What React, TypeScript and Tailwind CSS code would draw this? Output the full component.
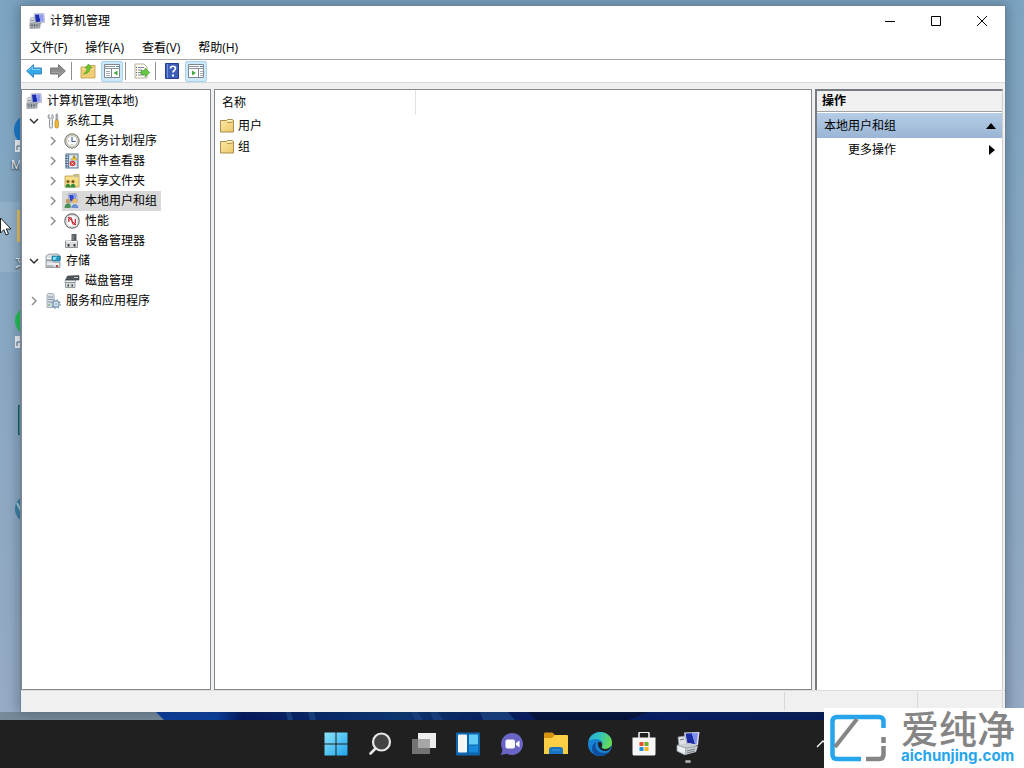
import { ReactNode, useState } from "react";
import clsx from "clsx";

type IconProps = { className?: string };

const ComputerIcon = ({ className = "size-4" }: IconProps) => (
  <svg viewBox="0 0 16 16" className={className} aria-hidden="true">
    <path d="M1 6.500 2 4.500l4-.5.5 5-5 1z" fill="#d5d9de" stroke="#9aa0a8" strokeWidth=".6" />
    <path d="M5 .8 15 .4l.6 9L6 10z" fill="#d4d7e2" stroke="#a0a5b8" strokeWidth=".6" />
    <path d="m6 1.800 4-.2L11.500 8.700 6.800 9z" fill="#1b2cae" />
    <path d="m10 1.600 4.200-.2.500 7-3.200.3z" fill="#8f9cf0" />
    <path d="m9 10 3-.2.500 1.500-3 .3z" fill="#9aa0a8" />
    <path d="M.8 10.200 9 9.800l2 1.200v4l-10 .5z" fill="#b3b8bd" stroke="#7d838a" strokeWidth=".6" />
    <path d="M1 12.200h10" stroke="#757c84" strokeWidth=".8" />
    <path d="M3 11v3.500M5.500 11v3.500M8 11v3.500" stroke="#656c74" strokeWidth="1" />
    <path d="M2 7.500h3" stroke="#8b9198" strokeWidth="1" />
  </svg>
);

const ToolsIcon = () => (
  <svg viewBox="0 0 16 16" className="size-4" aria-hidden="true">
    <path d="M3 1.500v3l1.500 1L6 4.500v-3c1.500.800 2 3 .5 4.800V14c0 1.500-3 1.500-3 0V6.300C1.500 5 1.800 2.200 3 1.500z" transform="translate(1)" fill="#e9ebee" stroke="#7d848c" strokeWidth=".8" />
    <path d="M11 1h1.500l.3 6h-2z" fill="#a8afb6" stroke="#767d85" strokeWidth=".5" />
    <rect x="10" y="7" width="3.500" height="8" rx="1.500" fill="#f0b63b" stroke="#b37b10" strokeWidth=".6" />
  </svg>
);

const ClockIcon = () => (
  <svg viewBox="0 0 16 16" className="size-4" aria-hidden="true">
    <circle cx="8" cy="8" r="7.200" fill="#d6d3c5" stroke="#77756b" strokeWidth="1" />
    <circle cx="8" cy="8" r="5.300" fill="#f8fbff" stroke="#aaa99f" strokeWidth=".6" />
    <path d="M8 4v4.500h3.500" fill="none" stroke="#3c5788" strokeWidth="1.100" />
    <path d="M4 8h1M8 12v-1M12 8h-.5" stroke="#b38a3b" strokeWidth="1" />
  </svg>
);

const EventIcon = () => (
  <svg viewBox="0 0 16 16" className="size-4" aria-hidden="true">
    <rect x="2" y="1" width="12" height="14" fill="#c8d8e8" stroke="#5b7893" />
    <path d="M4.500 1v14" stroke="#66829d" />
    <path d="M1 3h3M1 5.500h3M1 8h3M1 10.500h3M1 13h3" stroke="#44617f" strokeWidth=".9" />
    <path d="M6 4h6M6 13.500h6" stroke="#fff" />
    <path d="m10 2 3 5H7.500z" fill="#f8d744" stroke="#b28f16" strokeWidth=".5" />
    <path d="M10.200 3.500v2" stroke="#333" strokeWidth=".8" />
    <circle cx="8.500" cy="10.500" r="2.800" fill="#d83b3b" />
    <path d="m7.500 9.500 2 2m0-2-2 2" stroke="#fff" strokeWidth=".8" />
  </svg>
);

const FolderIcon = ({ className = "size-3.5" }: IconProps) => (
  <svg viewBox="0 0 14 14" className={className} aria-hidden="true">
    <defs>
      <linearGradient id="folderFill" x1="0" y1="0" x2="1" y2="1">
        <stop offset="0" stopColor="#fbe9a6" />
        <stop offset="1" stopColor="#ecc868" />
      </linearGradient>
    </defs>
    <path d="M.5 1.500h6l1-1h5l1 1v11.500H.5z" fill="url(#folderFill)" stroke="#a98d4e" strokeWidth="1" />
    <path d="M7 3.500h4.500l1-1.500" fill="none" stroke="#a98d4e" strokeWidth=".8" />
    <path d="M8 1.700h4" stroke="#fffbe2" strokeWidth="1" />
  </svg>
);

const SharedFolderIcon = () => (
  <svg viewBox="0 0 16 16" className="size-4" aria-hidden="true">
    <path d="M1 3h8l1-1.500h5V14H1z" fill="#f5dc86" stroke="#bd9a48" strokeWidth=".8" />
    <path d="M10 3h4" stroke="#6fa8d8" />
    <circle cx="4" cy="8.500" r="1.600" fill="#7a5a20" />
    <path d="M1.500 14.500c0-5 5-5 5 0z" fill="#348e3e" />
    <circle cx="9" cy="8.500" r="1.600" fill="#7a5a20" />
    <path d="M6.500 14.500c0-5 5-5 5 0z" fill="#348e3e" />
  </svg>
);

const UsersIcon = () => (
  <svg viewBox="0 0 16 16" className="size-4" aria-hidden="true">
    <path d="m4 1 8.500-.5 1 8-8 1z" fill="#d4d9ea" stroke="#838cab" strokeWidth=".6" />
    <path d="m5 2 6.500-.4.900 6L6.500 8.400z" fill="#2c47c7" />
    <path d="m9 2 2.500-.3.900 6-2 .3z" fill="#8ca0f0" />
    <circle cx="4" cy="8" r="2.300" fill="#c8995f" />
    <path d="M.5 15c0-6.500 7-6.500 7 0z" fill="#4b9157" />
    <circle cx="10.800" cy="8" r="2.600" fill="#e9bd68" />
    <path d="M6.800 15.500c0-6.500 8.200-6.500 8.200 0z" fill="#6b8fd0" stroke="#f2f5fc" strokeWidth=".6" />
  </svg>
);

const PerformanceIcon = () => (
  <svg viewBox="0 0 16 16" className="size-4" aria-hidden="true">
    <circle cx="8" cy="8" r="7.200" fill="#fff" stroke="#6d6d6d" strokeWidth="1.200" />
    <circle cx="8" cy="8" r="5.700" fill="none" stroke="#c9c9c9" strokeWidth=".8" />
    <path d="M4.800 9V6.500c0-2.500 2.600-2.500 2.900 0l.6 3c.4 2.500 2.900 2.500 3 0V6" fill="none" stroke="#c72b36" strokeWidth="1.300" />
    <path d="m4 4 8 8" stroke="#c72b36" strokeWidth="1" />
  </svg>
);

const DeviceIcon = () => (
  <svg viewBox="0 0 16 16" className="size-4" aria-hidden="true">
    <path d="M7.500 1h5v7h-5z" fill="#565c62" />
    <path d="M8.500 2h1v5h-1z" fill="#8b9298" />
    <path d="M1.500 8h12v6.500h-12z" fill="#d9dcde" stroke="#777d83" strokeWidth=".8" />
    <path d="M2 8.500h11" stroke="#f6f7f7" />
    <path d="M3.500 11h2v2.500h-2zM9.500 11h2v2.500h-2z" fill="#34393d" />
  </svg>
);

const StorageIcon = () => (
  <svg viewBox="0 0 16 16" className="size-4" aria-hidden="true">
    <path d="M1 3 4 1h9l2.500 2v4H1z" fill="#dce0e3" stroke="#7b848b" strokeWidth=".7" />
    <path d="M7 3h8v5H7z" fill="#229bc4" stroke="#146d95" strokeWidth=".6" />
    <path d="m8 4 4-.3L10 7H8z" fill="#8fe0f4" />
    <path d="M1 7.500h6L9 9h6v5.500H1z" fill="#d5d9dc" stroke="#717980" strokeWidth=".7" />
    <path d="M2 5.500h4M2 11h12" stroke="#fff" strokeWidth="1" />
    <path d="M2 13h6" stroke="#7b848b" strokeWidth=".8" />
    <path d="M11 12h2v2h-2z" fill="#b54533" />
  </svg>
);

const DiskIcon = () => (
  <svg viewBox="0 0 16 16" className="size-4" aria-hidden="true">
    <path d="M3.500 3 15 2.500V7H1.500z" fill="#50565b" stroke="#2e3337" strokeWidth=".5" />
    <path d="M10 4.500h4" stroke="#c6cacd" />
    <path d="M1 7.500h11l-1 2H1z" fill="#f2f3f4" stroke="#777d83" strokeWidth=".6" />
    <path d="M1.500 9.500h9.500v5H1.500z" fill="#d7dadc" stroke="#777d83" strokeWidth=".7" />
    <path d="M3.500 11.500h1.500v2H3.500zM7.500 11.500H9v2H7.500z" fill="#3b4044" />
  </svg>
);

const ServicesIcon = () => (
  <svg viewBox="0 0 16 16" className="size-4" aria-hidden="true">
    <path d="M2 1.500 3.500.5H8l1 1v13H2z" fill="#d6dee4" stroke="#8897a3" strokeWidth=".7" />
    <path d="M3 4h5M3 6.500h5M3 9h5" stroke="#758693" strokeWidth=".8" />
    <path d="M3 12h2" stroke="#46a35a" />
    <circle cx="11" cy="11" r="3" fill="#e6eff6" stroke="#80a0b9" strokeWidth="1.500" />
    <circle cx="11" cy="11" r="4.300" fill="none" stroke="#80a0b9" strokeWidth="1.200" strokeDasharray="1.700 1.700" />
    <circle cx="11" cy="11" r="1" fill="#80a0b9" />
  </svg>
);

const ArrowIcon = ({ forward = false }: { forward?: boolean }) => (
  <svg viewBox="0 0 16 16" className={clsx("size-4", forward && "rotate-180")} aria-hidden="true">
    <path
      d="M.6 8 7.500 1.600V5H15.400v6H7.500v3.400z"
      fill={forward ? "#8e8e8e" : "#35a7e8"}
      stroke={forward ? "#6f6f6f" : "#2b7fb8"}
      strokeWidth=".9"
      strokeLinejoin="round"
    />
    <path d="M2.500 7.500 6.500 3.800V6.500h8" fill="none" stroke={forward ? "#a4a4a4" : "#7fd6fa"} strokeWidth="1" />
  </svg>
);

const UpFolderIcon = () => (
  <svg viewBox="0 0 16 16" className="size-4" aria-hidden="true">
    <path d="M1 4h7l1.500-1.500H15V15H1z" fill="#f1ce73" stroke="#c09a48" strokeWidth=".8" />
    <path d="M2 6h12" stroke="#fae8ac" />
    <path d="M3.500 11C6 9.500 7 7.500 7 5H5L8.500 1 12 5h-2c0 3.500-2.500 6-6.500 6z" fill="#6ac52f" stroke="#3b8e18" strokeWidth=".5" />
  </svg>
);

const PaneIcon = ({ right = false }: { right?: boolean }) => (
  <svg viewBox="0 0 18 16" className="h-4 w-[18px]" aria-hidden="true">
    <path d="M1.500 1.500h15v13h-15z" fill="#fff" stroke="#7d8790" />
    <path d="M1 5.500h16M2 3.500h10" stroke="#8b949c" strokeWidth="1" />
    <path d="M13 3.500h3" stroke="#4b80bd" strokeWidth="1" />
    <path d={right ? "M11.500 6v8" : "M8.500 6v8"} stroke="#7d8790" />
    <path d={right ? "M13 8.500h3M13 10.500h3M13 12.500h3" : "M3 8.500h4M3 10.500h4M3 12.500h4"} stroke="#a3adb5" />
    <path d={right ? "m5 7.500 4 2.500-4 2.500z" : "m14.500 7.500-4 2.500 4 2.500z"} fill="#43a83c" />
  </svg>
);

const ExportIcon = () => (
  <svg viewBox="0 0 16 16" className="size-4" aria-hidden="true">
    <path d="M1 1h9l3 3v11H1z" fill="#fffdf0" stroke="#a3a08c" strokeWidth=".8" />
    <path d="M4 4.500h6M4 7h4M4 9.500h4M4 12h6" stroke="#767da5" strokeWidth=".9" />
    <path d="M2 4.500h1M2 7h1M2 9.500h1M2 12h1" stroke="#333" strokeWidth=".8" />
    <path d="M7 7.500h4V5l4.800 4.500L11 14v-2.500H7z" fill="#68c842" stroke="#3d9229" strokeWidth=".6" />
  </svg>
);

const HelpIcon = () => (
  <svg viewBox="0 0 16 16" className="size-4" aria-hidden="true">
    <path d="M1.500.5h13v15h-13z" fill="#3c5eb9" stroke="#243f8e" />
    <path d="M3.500 1v14" stroke="#7993d8" />
    <path d="M6.500 5.500c0-3 5-3 5 0 0 2-2.500 2-2.500 4" fill="none" stroke="#fff" strokeWidth="1.700" />
    <path d="M8 11.500h2v2H8z" fill="#fff" />
  </svg>
);

const Chevron = ({ open }: { open: boolean }) => (
  <svg viewBox="0 0 10 10" className="size-2.5" aria-hidden="true">
    {open ? (
      <path d="m1 3 4 4 4-4" fill="none" stroke="#333" strokeWidth="1.500" />
    ) : (
      <path d="m3 1 4 4-4 4" fill="none" stroke="#8a8a8a" strokeWidth="1.400" />
    )}
  </svg>
);

type TreeItem = {
  label: string;
  icon: ReactNode;
  open?: boolean;
  expandable?: boolean;
  children?: TreeItem[];
};

const treeItems: TreeItem[] = [
  {
    label: "系统工具",
    icon: <ToolsIcon />,
    expandable: true,
    open: true,
    children: [
      { label: "任务计划程序", icon: <ClockIcon />, expandable: true },
      { label: "事件查看器", icon: <EventIcon />, expandable: true },
      { label: "共享文件夹", icon: <SharedFolderIcon />, expandable: true },
      { label: "本地用户和组", icon: <UsersIcon />, expandable: true },
      { label: "性能", icon: <PerformanceIcon />, expandable: true },
      { label: "设备管理器", icon: <DeviceIcon /> },
    ],
  },
  {
    label: "存储",
    icon: <StorageIcon />,
    expandable: true,
    open: true,
    children: [{ label: "磁盘管理", icon: <DiskIcon /> }],
  },
  { label: "服务和应用程序", icon: <ServicesIcon />, expandable: true },
];

const menus = ["文件(F)", "操作(A)", "查看(V)", "帮助(H)"];

const TitleBar = () => (
  <header className="flex h-[29px] items-center pl-2">
    <ComputerIcon />
    <h1 className="ml-[5px] flex-1">计算机管理</h1>
    <button aria-label="最小化" className="flex h-full w-[46px] items-center justify-center">
      <svg viewBox="0 0 12 12" className="size-3"><path d="M1 6.500h10" stroke="#000" /></svg>
    </button>
    <button aria-label="最大化" className="flex h-full w-[46px] items-center justify-center">
      <svg viewBox="0 0 12 12" className="size-3"><path d="M1.500 1.500h9v9h-9z" fill="none" stroke="#000" /></svg>
    </button>
    <button aria-label="关闭" className="flex h-full w-[46px] items-center justify-center">
      <svg viewBox="0 0 12 12" className="size-3"><path d="m1 1 10 10M11 1 1 11" stroke="#000" /></svg>
    </button>
  </header>
);

const ToolButton = ({ label, active, children }: { label: string; active?: boolean; children: ReactNode }) => (
  <button
    aria-label={label}
    className={clsx(
      "flex h-[21px] w-[22px] items-center justify-center rounded-xs",
      active && "border border-[#a5d3f2] bg-[#cfe8f8]"
    )}
  >
    {children}
  </button>
);

const Separator = () => <span className="mr-[3px] h-[18px] w-px bg-[#8f8f8f]" />;

const Toolbar = () => (
  <div className="flex h-[23px] items-center gap-0.5 border-b border-[#d9d9d9] pl-0.5">
    <ToolButton label="后退"><ArrowIcon /></ToolButton>
    <ToolButton label="前进"><ArrowIcon forward /></ToolButton>
    <Separator />
    <ToolButton label="向上"><UpFolderIcon /></ToolButton>
    <ToolButton label="显示控制台树" active><PaneIcon /></ToolButton>
    <Separator />
    <ToolButton label="导出列表"><ExportIcon /></ToolButton>
    <Separator />
    <ToolButton label="帮助"><HelpIcon /></ToolButton>
    <ToolButton label="显示操作窗格" active><PaneIcon right /></ToolButton>
  </div>
);

const TreeRow = ({ item, nested, selected, onSelect }: {
  item: TreeItem;
  nested?: boolean;
  selected: string;
  onSelect: (label: string) => void;
}) => (
  <li>
    <div className={clsx("flex h-5 items-center", nested ? "pl-[26px]" : "pl-[7px]")}>
      <span className="w-3.5">{item.expandable && <Chevron open={!!item.open} />}</span>
      <button
        onClick={() => onSelect(item.label)}
        className={clsx("flex h-5 items-center gap-[5px] px-[2px] pr-1", selected === item.label && "bg-[#d9d9d9]")}
      >
        {item.icon}
        {item.label}
      </button>
    </div>
    {item.open && item.children && (
      <ul>
        {item.children.map((child) => (
          <TreeRow key={child.label} item={child} nested selected={selected} onSelect={onSelect} />
        ))}
      </ul>
    )}
  </li>
);

const ConsoleTree = () => {
  const [selected, setSelected] = useState("本地用户和组");

  return (
    <nav className="w-[190px] shrink-0 border border-[#828790] bg-white pt-px">
      <button className="flex h-5 items-center gap-[5px] pl-1">
        <ComputerIcon />
        计算机管理(本地)
      </button>
      <ul>
        {treeItems.map((item) => (
          <TreeRow key={item.label} item={item} selected={selected} onSelect={setSelected} />
        ))}
      </ul>
    </nav>
  );
};

const FileList = () => (
  <main className="min-w-0 flex-1 border border-[#828790] bg-white">
    <table className="w-[201px] text-left">
      <thead>
        <tr>
          <th className="h-[25px] border-r border-[#e2e2e2] pl-[7px] font-normal">名称</th>
        </tr>
      </thead>
      <tbody>
        {["用户", "组"].map((name) => (
          <tr key={name}>
            <td className="h-[21px] pl-[5px]">
              <span className="flex items-center gap-1">
                <FolderIcon />
                {name}
              </span>
            </td>
          </tr>
        ))}
      </tbody>
    </table>
  </main>
);

const ActionsPane = () => (
  <aside className="w-[188px] shrink-0 border-t-2 border-r border-l-2 border-t-[#777a80] border-r-[#d0d0d0] border-l-[#777a80] bg-white">
    <h2 className="flex h-[21px] items-center border-b border-[#a0a0a0] bg-[#f0f0f0] pl-[5px] font-bold">操作</h2>
    <button className="mt-px flex h-[25px] w-full items-center justify-between bg-linear-to-b from-[#b5cce5] to-[#9ab5d5] pr-1.5 pl-[7px]">
      本地用户和组
      <svg viewBox="0 0 10 6" className="h-1.5 w-2.5"><path d="m5 0 5 6H0z" /></svg>
    </button>
    <button className="flex h-[23px] w-full items-center justify-between pr-[7px] pl-[31px]">
      更多操作
      <svg viewBox="0 0 6 10" className="h-2.5 w-1.5"><path d="m0 0 6 5-6 5z" /></svg>
    </button>
  </aside>
);

// shortcuts that stick out from behind the window
const DesktopIcons = () => (
  <div className="absolute top-0 left-0 w-12" aria-hidden="true">
    <svg viewBox="0 0 48 720" className="h-[720px] w-12">
      <circle cx="30" cy="130" r="16" fill="#1678c8" />
      <path d="M15 140h12v12H15z" fill="#f4f6f8" />
      <path d="M17 150v-4h3" fill="none" stroke="#44637c" />
      <path d="M0 202h48v70H0z" fill="#fff" opacity=".1" />
      <path d="M17 210h20v32H17z" fill="#ecc25c" />
      <circle cx="29" cy="321" r="14" fill="#21c34f" />
      <path d="M15 336h12v12H15z" fill="#f4f6f8" />
      <path d="M17 346v-4h3" fill="none" stroke="#44637c" />
      <path d="M18.500 405.500h12v29h-12z" fill="#3b9095" stroke="#17565c" />
      <circle cx="29" cy="509" r="14" fill="#397f9e" />
      <path d="m17 503 5 10" stroke="#a8ccdc" strokeWidth="2" />
    </svg>
    <span className="absolute top-[157px] left-[11px] text-xs text-white [text-shadow:0_1px_2px_#000]">M</span>
    <span className="absolute top-[255px] left-[15px] text-xs text-white [text-shadow:0_1px_2px_#000]">文</span>
  </div>
);

const Wallpaper = () => (
  <svg viewBox="0 0 1024 8" preserveAspectRatio="none" className="h-2 w-full shrink-0" aria-hidden="true">
    <defs>
      <linearGradient id="bloom">
        <stop offset="0" stopColor="#0b3b9d" />
        <stop offset=".07" stopColor="#0a3f9f" />
        <stop offset=".1" stopColor="#03175e" />
        <stop offset=".28" stopColor="#0b3775" />
        <stop offset=".4" stopColor="#061b60" />
        <stop offset=".6" stopColor="#061d66" />
        <stop offset="1" stopColor="#07163f" />
      </linearGradient>
    </defs>
    <path d="M0 0h1024v8H0z" fill="#788b9b" />
    <path d="M156 0h868v8H164z" fill="url(#bloom)" />
    <path d="M286 0h5l2 8h-5zM308 0h6l2 8h-6zM411 0h7l5 8h-8zM430 0h8l5 8h-10zM480 0h28l7 8h-32z" fill="#173f80" />
    <path d="M528 0h120l-20 8h-92z" fill="#04103b" />
  </svg>
);

const taskbarItems: { label: string; icon: ReactNode }[] = [
  {
    label: "开始",
    icon: (
      <svg viewBox="0 0 24 24" className="size-6">
        <defs>
          <linearGradient id="start" x1="0" y1="0" x2="1" y2="1">
            <stop offset="0" stopColor="#8be5fb" />
            <stop offset="1" stopColor="#20a4ec" />
          </linearGradient>
        </defs>
        <path d="M.5.5h11v11H.5zM12.500.5h11v11h-11zM.5 12.500h11v11H.5zM12.500 12.500h11v11h-11z" fill="url(#start)" />
      </svg>
    ),
  },
  {
    label: "搜索",
    icon: (
      <svg viewBox="0 0 24 24" className="size-6">
        <circle cx="13.500" cy="10" r="8.500" fill="#444" stroke="#e8e8e8" strokeWidth="2.200" />
        <path d="m7.500 16.500-5 5" stroke="#e8e8e8" strokeWidth="2.600" strokeLinecap="round" />
      </svg>
    ),
  },
  {
    label: "任务视图",
    icon: (
      <svg viewBox="0 0 24 24" className="size-6">
        <path d="M6 1h18v15H6z" fill="#ededed" />
        <path d="M0 7h18v15H0z" fill="#737373" />
        <path d="M6 7h12v9H6z" fill="#a6a6a6" />
      </svg>
    ),
  },
  {
    label: "小组件",
    icon: (
      <svg viewBox="0 0 24 24" className="size-6">
        <rect width="24" height="23" y=".5" rx="1" fill="#0d66ae" />
        <rect x="2" y="2.500" width="9" height="18" rx="1" fill="#f6f6f6" />
        <path d="M13 2.500h9v10h-9z" fill="#63cdf5" />
        <path d="M13 13.500h9v7h-9z" fill="#1689dd" />
      </svg>
    ),
  },
  {
    label: "聊天",
    icon: (
      <svg viewBox="0 0 24 24" className="size-6">
        <path d="M12 1a11 11 0 1 1-5 20.800L1 23l1.500-5.500A11 11 0 0 1 12 1z" fill="#6865c5" />
        <rect x="5.500" y="7.500" width="9.500" height="9" rx="2" fill="#fff" />
        <path d="m16 11 3.500-2.500v7L16 13z" fill="#fff" />
      </svg>
    ),
  },
  {
    label: "文件资源管理器",
    icon: (
      <svg viewBox="0 0 24 24" className="size-6">
        <path d="M0 2c0-1 .5-1.500 1.500-1.500h7L11 3v4H0z" fill="#d99112" />
        <path d="M0 6h8l3-3h12q1 0 1 1v18H0z" fill="#fcce45" />
        <path d="M5 22v-4q0-3 3-3h8q3 0 3 3v4z" fill="#1873c0" />
        <path d="M8 18h8" stroke="#4799d7" strokeWidth="1" />
      </svg>
    ),
  },
  {
    label: "Microsoft Edge",
    icon: (
      <svg viewBox="0 0 24 24" className="size-6">
        <defs>
          <linearGradient id="edgeTop" x1="0" y1="0" x2="1" y2=".3">
            <stop offset="0" stopColor="#28a8d8" />
            <stop offset=".5" stopColor="#31c4c0" />
            <stop offset="1" stopColor="#65d956" />
          </linearGradient>
        </defs>
        <circle cx="12" cy="12" r="12" fill="#1683d5" />
        <path d="M.5 9C2 3.500 6.500 0 12 0c7 0 12 5 12 10.500 0 4-3 6.500-6.500 6.500-3 0-4.500-1-3.500-2.500 2-3.500-1-7.500-5.500-7.500C4.500 7 2 8 .5 9z" fill="url(#edgeTop)" />
        <path d="M9 9.500c-4 5 0 12 8 11.500 2 0 3.500-.8 4.800-2A12 12 0 0 1 12 24C7 24 4 20.500 4 16.500c0-3 2-5.500 5-7z" fill="#104f9e" />
        <path d="M10 10.500c2-2 5 .5 4 4-1 1.500.5 2.500 3.500 2.500 2 0 4-1 5.500-3-1 4-3 5-6 5-5 0-8-5-7-8.500z" fill="#222" />
      </svg>
    ),
  },
  {
    label: "Microsoft Store",
    icon: (
      <svg viewBox="0 0 24 24" className="size-6">
        <path d="M7 6V1.500Q7 .3 8.200.3h7.600Q17 .3 17 1.500V6" fill="none" stroke="#eee" strokeWidth="1.600" />
        <path d="M.5 5.500h23V22q0 1.500-1.500 1.500H2Q.5 23.500.5 22z" fill="#f7f5f6" />
        <path d="M7.500 10h4v4h-4z" fill="#e5512b" />
        <path d="M12.500 10h4v4h-4z" fill="#72ad27" />
        <path d="M7.500 15h4v4h-4z" fill="#2490d7" />
        <path d="M12.500 15h4v4h-4z" fill="#f3b321" />
      </svg>
    ),
  },
  {
    label: "计算机管理",
    icon: (
      <svg viewBox="0 0 24 24" className="size-6">
        <path d="M8 .5 23.500 0 22 13 10 12.500z" fill="#d9dcee" />
        <path d="m9.500 1.500 6.500-.3L19 12l-7.500-.5z" fill="#1b2ba5" />
        <path d="m16 1.200 6-.2-1.500 11L19 12z" fill="#7e90ec" />
        <path d="m2 5 7-1 2 8-8 2z" fill="#dfe2e5" stroke="#8e959d" strokeWidth=".7" />
        <path d="m1 13 13-2 8 3-2 6-11 3-8-4z" fill="#c9ced4" />
        <path d="m1 13 9 3-1 7-8-4zM10 16l12-2" fill="#edf0f2" stroke="#8e959d" strokeWidth=".8" />
        <path d="m11 19 8-2M11 21l8-2" stroke="#737b84" strokeWidth="1" />
        <path d="m4 8 4-1" stroke="#69717b" strokeWidth="1" />
      </svg>
    ),
  },
];

const Taskbar = () => (
  <footer className="relative flex h-12 shrink-0 items-stretch justify-center bg-[#202020]">
    {taskbarItems.map((item, i) => (
      <button key={item.label} aria-label={item.label} className="relative flex w-11 items-center justify-center">
        {item.icon}
        {i === taskbarItems.length - 1 && (
          <span className="absolute bottom-[5px] h-[3px] w-1.5 rounded-full bg-[#a0a0a0]" />
        )}
      </button>
    ))}
    <button aria-label="显示隐藏的图标" className="absolute inset-y-0 right-[194px] flex items-center">
      <svg viewBox="0 0 14 8" className="h-2 w-3.5"><path d="m1 7 6-6 6 6" fill="none" stroke="#fff" strokeWidth="1.300" /></svg>
    </button>
  </footer>
);

const Watermark = () => (
  <div className="absolute right-0 bottom-0 flex h-[60px] w-[200px] items-center bg-white pl-1.5">
    <svg viewBox="0 0 56 48" className="h-12 w-14 shrink-0" aria-hidden="true">
      <path d="M31 45H7q-4.500 0-4.500-4.500v-33Q2.500 3 7 3h42q4.500 0 4.500 4.500V14" fill="none" stroke="#27a5ec" strokeWidth="4.500" />
      <path d="M36 45h13q4.500 0 4.500-4.500V32M53.500 29v-6" fill="none" stroke="#858585" strokeWidth="4.500" />
      <path d="M5 33 27 5" stroke="#858585" strokeWidth="4" />
    </svg>
    <div className="ml-[15px] flex flex-col">
      <span className="text-[38px] leading-[36px] font-medium whitespace-nowrap text-[#858585]">爱纯净</span>
      <span className="font-[Inter,sans-serif] text-[15px] leading-5 font-bold text-[#27a5ec]">aichunjing.com</span>
    </div>
  </div>
);

export default function App() {
  return (
    <div className="relative flex h-screen flex-col overflow-hidden bg-linear-to-b from-[#7da5c1] to-[#98abc4] font-['Open_Sans','Noto_Sans_CJK_SC',sans-serif] text-xs text-black">
      <DesktopIcons />
      <section className="relative mt-[5px] mr-[18px] ml-5 flex min-h-0 flex-1 flex-col border-x border-t border-[#6d8496] bg-white shadow-[0_0_12px_2px_rgba(30,50,70,0.35)]">
        <TitleBar />
        <div className="flex h-[25px] items-stretch gap-0.5 border-b border-[#a6a6a6] pt-0.5 pl-px">
          {menus.map((menu) => (
            <button key={menu} className="px-2">{menu}</button>
          ))}
        </div>
        <Toolbar />
        <div className="flex min-h-0 flex-1 gap-[3px] bg-[#f0f0f0] pt-1.5 pr-0.5">
          <ConsoleTree />
          <FileList />
          <ActionsPane />
        </div>
        <div className="flex h-[22px] shrink-0 justify-end border-t border-[#dcdcdc] bg-[#f0f0f0] pt-px pr-0.5 pb-0.5">
          <span className="w-[133px] border-l border-[#d7d7d7]" />
          <span className="w-[86px] border-x border-[#d7d7d7]" />
        </div>
      </section>
      <Wallpaper />
      <Taskbar />
      <Watermark />
      <svg viewBox="0 0 12 19" className="absolute top-[217px] left-0 h-[19px] w-3" aria-hidden="true">
        <path d="M.5 1v15l3.300-3.300L6 18l2.500-1-2.200-5h4.700z" fill="#fff" stroke="#111" strokeWidth=".9" />
      </svg>
    </div>
  );
}
